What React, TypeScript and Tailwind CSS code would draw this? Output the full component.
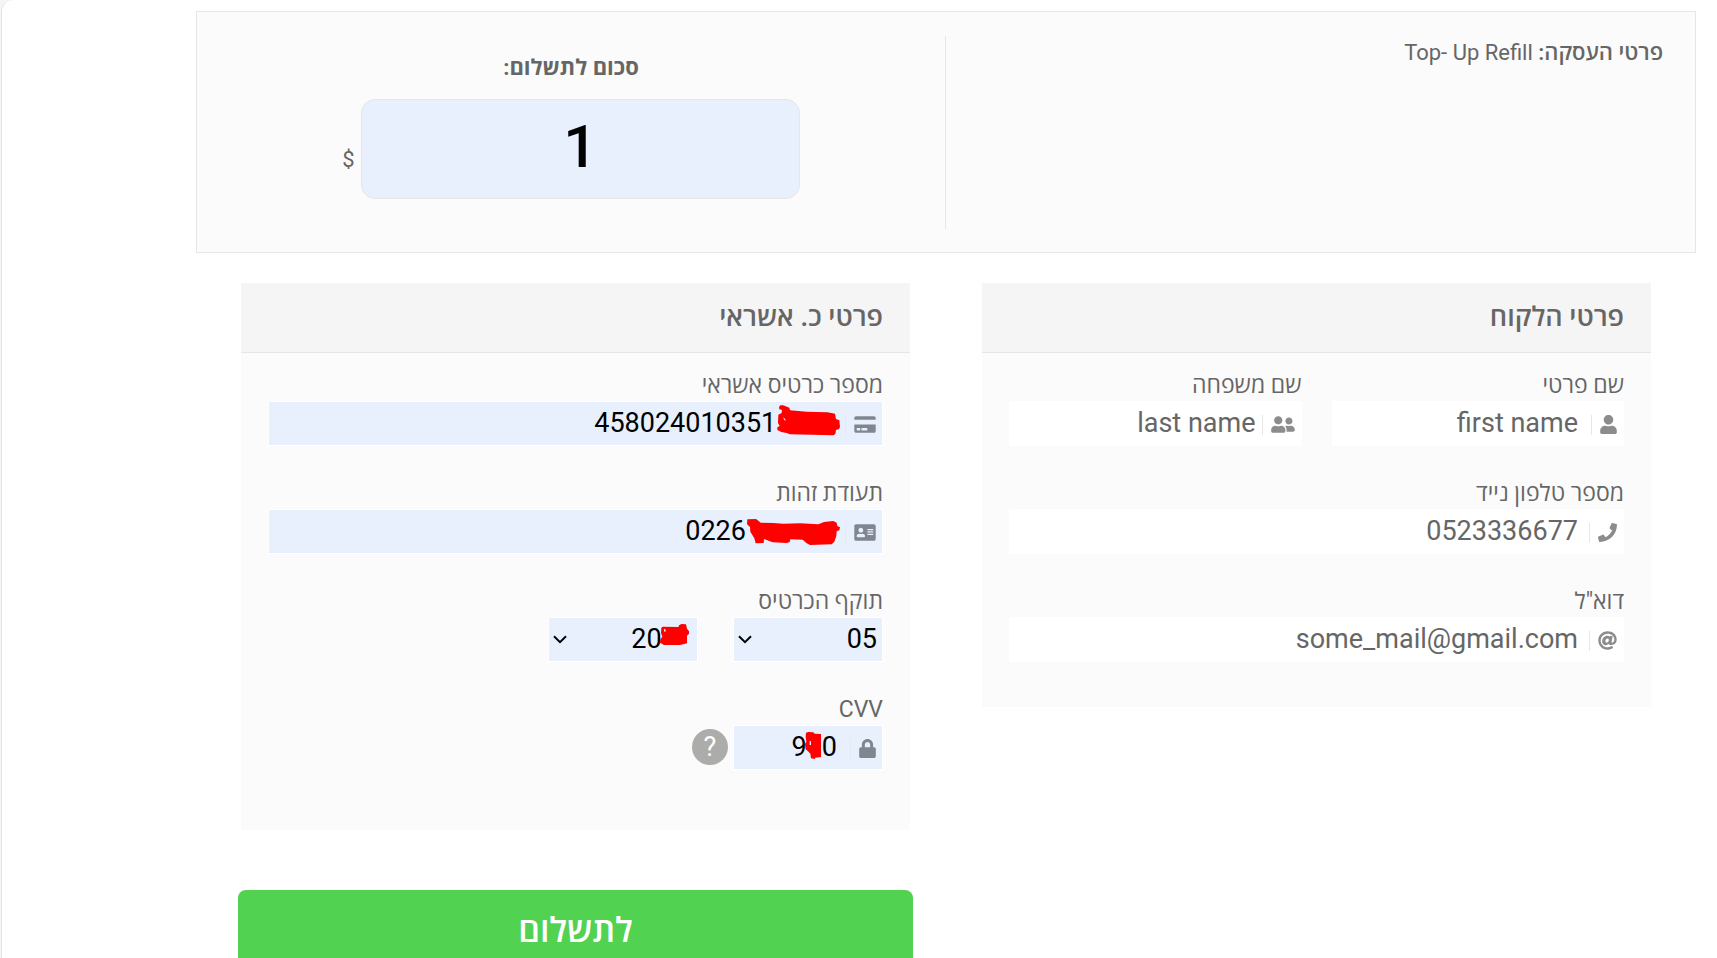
import React from 'react';
import type { IconType } from 'react-icons';
import { FaAddressCard, FaAt, FaCreditCard, FaLock, FaPhone, FaUser, FaUserFriends } from 'react-icons/fa';

// Figure space: keeps the width of a digit for the hidden parts of a number
const HIDDEN = '\u2007';
// Left-to-right mark, so that the hidden digits stay after the visible ones
const LRM = '\u200e';

interface ScribbleProps {
  viewBox: string;
  d: string;
  className: string;
}

const Scribble: React.FC<ScribbleProps> = ({ viewBox, d, className }) => (
  <svg viewBox={viewBox} className={`absolute pointer-events-none ${className}`} aria-hidden="true">
    <path d={d} fill="#ff0000" fillRule="evenodd" strokeLinejoin="round" />
  </svg>
);

interface FieldProps {
  id: string;
  label: string;
  value: string;
  icon: IconType;
  iconClass: string;
  type?: string;
  filled?: boolean;
  className?: string;
  children?: React.ReactNode;
}

const Field: React.FC<FieldProps> = ({ id, label, value, icon: Icon, iconClass, type = 'text', filled, className = '', children }) => (
  <div className={className}>
    <label htmlFor={id} className="block whitespace-nowrap text-[23px] leading-[30px]">{label}</label>
    <div className="relative">
      <input
        id={id}
        type={type}
        dir="ltr"
        defaultValue={value}
        className={`block h-[45px] w-full border border-white pb-[2px] pl-2 pr-[45px] text-right text-[27px] outline-none ${filled ? 'bg-[#e8f0fe] text-black' : 'bg-white text-[#666]'}`}
      />
      <span className={`pointer-events-none absolute right-[7px] top-[14px] flex h-5 items-start border-l pl-2 ${filled ? 'border-[#e4e8ef] text-[#80868f]' : 'border-[#e6e6e6] text-[#8c8c8c]'}`}>
        <Icon className={`h-[19px] shrink-0 ${iconClass}`} />
      </span>
      {children}
    </div>
  </div>
);

interface DateSelectProps {
  id: string;
  label: string;
  value: string;
  children?: React.ReactNode;
}

const DateSelect: React.FC<DateSelectProps> = ({ id, label, value, children }) => (
  <div className="relative w-[150px]">
    <select
      id={id}
      aria-label={label}
      defaultValue={value}
      className="block h-[45px] w-full appearance-none border border-white bg-[#e8f0fe] px-[5px] text-[27px] text-black outline-none"
    >
      <option value={value}>{value}</option>
    </select>
    <svg viewBox="0 0 14 9" className="pointer-events-none absolute left-[5px] top-[18px] h-[9px] w-[14px]" fill="none" stroke="#000" strokeWidth={2}>
      <path d="M1 1.2L7 7.2L13 1.2" />
    </svg>
    {children}
  </div>
);

interface CardProps {
  title: string;
  className?: string;
  children: React.ReactNode;
}

const Card: React.FC<CardProps> = ({ title, className = '', children }) => (
  <section className="bg-[#fbfbfb]">
    <h2 className="border-b border-[#e6e6e6] bg-[#f5f5f5] px-[27px] py-4 text-[27px] font-semibold leading-[37px]">{title}</h2>
    <div className={`flex flex-col gap-[33px] px-[27px] pt-[18px] ${className}`}>{children}</div>
  </section>
);

export default function App() {
  return (
    <div dir="rtl" className="min-h-screen bg-[#f5f5f5] pl-px font-['Roboto','Open_Sans',sans-serif] text-[#666]">
      <main className="min-h-screen rounded-tl-xl border-l border-[#e3e3e3] bg-white pr-[21px] pt-[11px]">
        <form className="w-full max-w-[1500px]" onSubmit={(e) => e.preventDefault()}>
          <div className="grid grid-cols-2 border border-[#e6e6e6] bg-[#fbfbfb] pb-[23px] pt-6">
            <p className="pr-8 pt-[2px] text-[22px] leading-[30px]">
              <strong className="font-semibold">פרטי העסקה:</strong> <span dir="ltr">Top- Up Refill</span>
            </p>
            <div className="flex flex-col items-center border-r border-[#e6e6e6] pb-[30px] pt-[17px]">
              <label htmlFor="amount" className="mb-4 text-[22px] font-bold leading-[30px]">סכום לתשלום:</label>
              <div className="flex items-center gap-[6px]">
                <input
                  id="amount"
                  type="text"
                  defaultValue="1"
                  className="h-[100px] w-[439px] rounded-[14px] border border-[#e6e6e6] bg-[#e8f0fe] pb-[6px] text-center text-[60px] font-medium text-black outline-none"
                />
                <span className="pt-[22px] text-[22px] leading-[30px]">$</span>
              </div>
            </div>
          </div>

          <div className="mt-[30px] grid grid-cols-2 items-start gap-[72px] px-[45px]">
            <Card title="פרטי הלקוח" className="pb-[45px]">
              <div className="grid grid-cols-2 gap-[30px]">
                <Field id="first-name" label="שם פרטי" value="first name" icon={FaUser} iconClass="w-[17px]" />
                <Field id="last-name" label="שם משפחה" value="last name" icon={FaUserFriends} iconClass="w-6" />
              </div>
              <Field id="phone" label="מספר טלפון נייד" value="0523336677" type="tel" icon={FaPhone} iconClass="w-[19px]" />
              <Field id="email" label={'דוא"ל'} value="some_mail@gmail.com" type="email" icon={FaAt} iconClass="w-[19px]" />
            </Card>

            <div>
              <Card title="פרטי כ. אשראי" className="pb-[60px]">
                <Field id="card-number" label="מספר כרטיס אשראי" value={'458024010351' + HIDDEN.repeat(4)} icon={FaCreditCard} iconClass="w-[22px]" filled>
                  <Scribble
                    viewBox="111 46 189 93"
                    className="right-[43px] top-1 h-[31px] w-[63px]"
                    d="M117 52L121 47L130 47L148 54L150 62L200 66L262 68L285 72L288 88L298 92L300 112L297 118L288 121L286 133L280 137L150 134L140 130L124 127L112 121L112 113L119 109L114 100L115 75L125 70L126 61L118 59ZM130 83L132 90L137 94L135 87Z"
                  />
                </Field>
                <Field id="id-number" label="תעודת זהות" value={'0226' + HIDDEN.repeat(6)} icon={FaAddressCard} iconClass="w-[22px]" filled>
                  <Scribble
                    viewBox="21 387 279 78"
                    className="right-[43px] top-[10px] h-[26px] w-[93px]"
                    d="M22 388L48 387L55 392L62 398L100 399L130 401L180 400L235 403L252 396L280 393L290 398L292 408L300 412L298 421L290 424L289 438L283 455L275 463L210 465L200 460L188 449L151 448L149 456L140 459L98 457L72 447L71 459L47 460L43 445L31 425L30 411L21 403Z"
                  />
                </Field>
                <fieldset>
                  <legend className="text-[23px] leading-[30px]">תוקף הכרטיס</legend>
                  <div className="flex gap-[35px]">
                    <DateSelect id="month" label="חודש" value="05" />
                    <DateSelect id="year" label="שנה" value={LRM + '20' + HIDDEN.repeat(2) + LRM}>
                      <Scribble
                        viewBox="420 192 87 63"
                        className="right-[9px] top-[7px] h-[21px] w-[29px]"
                        d="M424 203L428 200L475 201L478 195L485 192L498 193L501 206L507 214L507 221L501 227L501 250L480 255L432 255L420 248L421 238L427 230L423 219ZM432 206L432 214L436 216L437 209Z"
                      />
                    </DateSelect>
                  </div>
                </fieldset>
                <div className="flex items-end gap-[5px]">
                  <Field id="cvv" label="CVV" value={'9' + HIDDEN + '0'} icon={FaLock} iconClass="w-[17px]" filled className="w-[150px]">
                    <Scribble
                      viewBox="855 516 48 81"
                      className="right-[62px] top-[7px] h-[27px] w-4"
                      d="M858 518L865 516L880 517L884 521L903 522L903 591L886 593L884 597L873 595L871 581L864 574L857 568L855 552L859 545L857 531ZM869 543L869 555L873 555L873 543Z"
                    />
                  </Field>
                  <button type="button" aria-label="מה זה CVV" className="mb-[5px] h-9 w-9 rounded-full bg-[#acacaa] text-[27px] leading-9 text-white">?</button>
                </div>
              </Card>
              <div className="-mx-[3px] mt-[60px]">
                <button type="submit" className="block w-full rounded-lg bg-[#51d251] py-5 text-[34px] font-semibold leading-10 text-white">לתשלום</button>
              </div>
            </div>
          </div>
        </form>
      </main>
    </div>
  );
}
